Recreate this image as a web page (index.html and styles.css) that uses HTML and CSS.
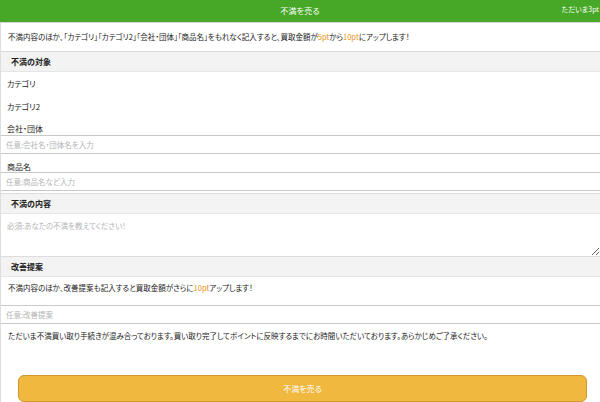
FILE: index.html
```html
<!DOCTYPE html>
<html lang="ja">
<head>
<meta charset="utf-8">
<title>不満を売る</title>
<link rel="stylesheet" href="styles.css">
</head>
<body>
<header class="topbar">
  <h1 class="topbar-title">不満を売る</h1>
  <span class="topbar-status">ただいま3pt</span>
</header>
<main class="form">
  <p class="intro">不満内容のほか、「カテゴリ」「カテゴリ2」「会社・団体」「商品名」をもれなく記入すると、買取金額が<span class="pt">5pt</span>から<span class="pt">10pt</span>にアップします！</p>

  <h2 class="sec">不満の対象</h2>
  <div class="target-list">
    <div class="field-label">カテゴリ</div>
    <div class="field-label">カテゴリ2</div>
    <div class="field-label">会社・団体</div>
  </div>
  <input class="text-input" type="text" placeholder="任意:会社名・団体名を入力">
  <div class="field-label field-label-product">商品名</div>
  <input class="text-input" type="text" placeholder="任意:商品名など入力">

  <h2 class="sec sec-gap">不満の内容</h2>
  <textarea class="text-area" placeholder="必須:あなたの不満を教えてください！"></textarea>

  <h2 class="sec">改善提案</h2>
  <p class="note">不満内容のほか、改善提案も記入すると買取金額がさらに<span class="pt">10pt</span>アップします！</p>
  <input class="text-input" type="text" placeholder="任意:改善提案">

  <p class="notice">ただいま不満買い取り手続きが混み合っております。買い取り完了してポイントに反映するまでにお時間いただいております。あらかじめご了承ください。</p>

  <div class="btn-wrap">
    <button class="btn-sell" type="button">不満を売る</button>
  </div>
</main>
</body>
</html>
```

FILE: styles.css
```css
* {
  box-sizing: border-box;
}

html, body {
  margin: 0;
  padding: 0;
  background: #ffffff;
  overflow: hidden;
}

body {
  font-family: "Noto Sans CJK JP", "Noto Sans", sans-serif;
  font-feature-settings: "palt";
  font-size: 7.5px;
  color: #222222;
  width: 600px;
  height: 402px;
}

.topbar {
  position: relative;
  height: 23px;
  background: #46a826;
  border-bottom: 1px solid #d6d6d6;
  display: flex;
  align-items: center;
  justify-content: center;
}

.topbar-title {
  margin: 0;
  font-size: 8px;
  font-weight: normal;
  color: #ffffff;
  line-height: 12px;
  letter-spacing: 0.2px;
}

.topbar-status {
  position: absolute;
  right: 1px;
  top: 4px;
  font-size: 7px;
  line-height: 10px;
  color: #ffffff;
  white-space: nowrap;
}

.form {
  border-left: 1px solid #dedede;
  display: flex;
  flex-direction: column;
  height: 379px;
}

.intro {
  margin: 0;
  height: 28px;
  padding: 0 7px;
  line-height: 28px;
  white-space: nowrap;
}

.pt {
  color: #e8900c;
}

.sec {
  margin: 0;
  height: 21px;
  padding: 0 10px;
  background: #f3f3f3;
  border-top: 1px solid #dcdcdc;
  border-bottom: 1px solid #e6e6e6;
  font-size: 8px;
  font-weight: bold;
  line-height: 19px;
  color: #222222;
}

.sec-gap {
  margin-top: 2px;
}

.target-list {
  display: flex;
  flex-direction: column;
  gap: 10.5px;
  padding-top: 6px;
}

.field-label {
  padding: 0 6px;
  line-height: 12px;
  font-size: 8px;
}

.field-label-product {
  padding-top: 7px;
  line-height: 11px;
}

.text-input {
  display: block;
  width: 100%;
  height: 19px;
  margin: 0;
  padding: 0 5px;
  border: none;
  border-top: 1px solid #c8c8c8;
  border-bottom: 1px solid #c8c8c8;
  background: #ffffff;
  font-family: inherit;
  font-feature-settings: "palt";
  font-size: 7.5px;
  color: #222222;
  outline: none;
}

.text-input::placeholder,
.text-area::placeholder {
  color: #b4b4b4;
}

.text-area {
  display: block;
  width: 100%;
  height: 42px;
  margin: 0;
  padding: 7px 6px 0;
  border: none;
  resize: vertical;
  background: #ffffff;
  font-family: inherit;
  font-feature-settings: "palt";
  font-size: 7.5px;
  line-height: 10px;
  outline: none;
}

.note {
  margin: 0;
  height: 28px;
  padding: 5px 7px 0;
  line-height: 12px;
  white-space: nowrap;
}

.notice {
  margin: 0;
  padding: 6px 7px 0;
  line-height: 12px;
  white-space: nowrap;
}

.btn-wrap {
  padding: 33px 13px 0 17px;
}

.btn-sell {
  display: block;
  width: 100%;
  height: 27px;
  margin: 0;
  background: #f0b83f;
  border: 1px solid #d3982c;
  border-radius: 6px;
  color: #ffffff;
  font-family: inherit;
  font-feature-settings: "palt";
  font-size: 8px;
  line-height: 25px;
  padding: 0;
}
```
